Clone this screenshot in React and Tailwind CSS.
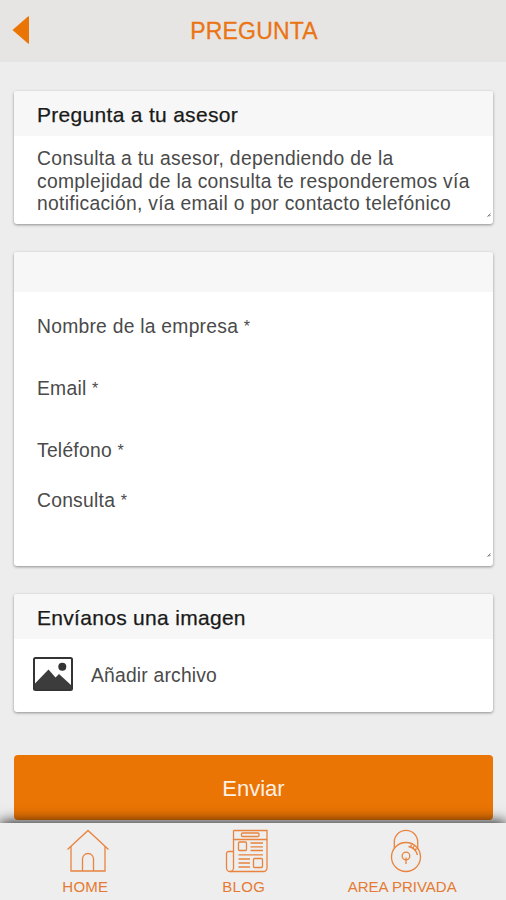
function HomeIcon() {
  return (
    <svg className="ml-[5px]" width="44" height="44" viewBox="0 0 44 44" fill="none" stroke="#e8843f" strokeWidth="1.3">
      <path d="M1.5 20.5 L22 1.5 L42.5 20.5" />
      <path d="M5 17.5 V42 H39 V17.5" />
      <path d="M16.5 42 V30 a5.5 5.5 0 0 1 11 0 V42" />
    </svg>
  );
}

function BlogIcon() {
  return (
    <svg className="ml-[6px]" width="44" height="44" viewBox="0 0 44 44" fill="none" stroke="#e8843f" strokeWidth="1.3">
      <path d="M8.5 1.5 H42 V39 a3.5 3.5 0 0 1 -3.5 3.5 H5 a3.5 3.5 0 0 1 -3.5 -3.5 V24.5 a2 2 0 0 1 2 -2 H8.5" />
      <path d="M8.5 1.5 V39 a3.5 3.5 0 0 1 -3.5 3.5" />
      <path d="M8.5 10.5 H42" />
      <rect x="16.5" y="4" width="17.5" height="3.5" rx="1" />
      <rect x="13.5" y="13" width="8" height="8.5" rx="1" />
      <rect x="28.5" y="29.5" width="9" height="9" rx="1" />
      <path d="M25.5 14 H38 M25.5 17.8 H38 M25.5 21.5 H38 M13.5 25.8 H38 M13.5 30 H25 M13.5 34 H25 M13.5 38 H25" />
    </svg>
  );
}

function LockIcon() {
  return (
    <svg className="ml-[7px]" width="44" height="44" viewBox="0 0 44 44" fill="none" stroke="#e8843f" strokeWidth="1.3">
      <circle cx="22" cy="28" r="14.5" />
      <path d="M10.3 19 V13 a11.7 11.7 0 0 1 23.4 0 V20" />
      <path d="M24.5 17.5 A11.5 11.5 0 0 1 33.5 26 M27.5 15.5 L26.5 18 M30 17 L28.5 20 M32.5 19.5 L30.5 22" />
      <circle cx="22" cy="27" r="3.8" />
      <path d="M22 28.5 V35" />
    </svg>
  );
}

function PictureIcon() {
  return (
    <svg className="-mt-[2px]" width="40" height="34" viewBox="0 0 40 34">
      <rect x="1" y="1" width="38" height="32" rx="1.5" fill="#fff" stroke="#333" strokeWidth="2" />
      <path d="M1.5 27 L15.5 12.5 L22.5 20.5 L26 17 L38.5 28.5 V32.5 H1.5 Z" fill="#3c3c3c" />
      <circle cx="29.3" cy="9.8" r="4" fill="#333" />
    </svg>
  );
}

function ResizeGrip({ className }) {
  return (
    <svg className={`absolute ${className}`} width="4" height="4" viewBox="0 0 4 4" stroke="#777">
      <path d="M0.5 3.5 L3.5 0.5 M2 3.5 L3.5 2" />
    </svg>
  );
}

const fields = ["Nombre de la empresa", "Email", "Teléfono"];

const tabs = [
  { label: "HOME", icon: HomeIcon, spacing: "tracking-[0.2px]" },
  { label: "BLOG", icon: BlogIcon, spacing: "tracking-[0.3px]" },
  { label: "AREA PRIVADA", icon: LockIcon, spacing: "tracking-normal" },
];

const cardStyle =
  "relative ml-[14px] w-[479px] shrink-0 overflow-hidden rounded-[3px] bg-white shadow-[0_1px_3px_rgba(0,0,0,0.4)]";

const titleStyle =
  "h-[45px] bg-[#f7f7f7] pl-[23px] text-[21px] leading-[48px] tracking-[0.3px] text-[#1a1a1a] [-webkit-text-stroke:0.25px]";

function FieldLabel({ text, className }) {
  return (
    <label className={className}>
      {text} <span className="relative -top-[1px] text-[16px]">*</span>
    </label>
  );
}

export default function App() {
  return (
    <div className="flex h-[900px] w-[506px] flex-col overflow-hidden bg-[#ededed] font-['Liberation_Sans',Arial,sans-serif]">
      <header className="grid h-[62px] shrink-0 grid-cols-[30px_1fr_30px] items-center bg-[#e6e5e3]">
        <svg className="ml-3 -mt-[2px]" width="17" height="28" viewBox="0 0 17 28" fill="#ea7404">
          <path d="M0.5 14 L16 0.5 Q17 0 17 1 V27 Q17 28 16 27.5 Z" />
        </svg>
        <h1 className="pl-[2px] text-center text-[23px] leading-[30px] tracking-[0.2px] text-[#ea7414] [-webkit-text-stroke:0.3px]">
          PREGUNTA
        </h1>
      </header>

      <main className="flex h-[761px] shrink-0 flex-col overflow-hidden pt-[29px]">
        <section className={`${cardStyle} h-[133px]`}>
          <h2 className={titleStyle}>Pregunta a tu asesor</h2>
          <p className="pl-[23px] pt-[12px] text-[19.3px] leading-[22.5px] tracking-[0.29px] whitespace-nowrap text-[#4a4a4a]">
            Consulta a tu asesor, dependiendo de la
            <br />
            complejidad de la consulta te responderemos vía
            <br />
            notificación, vía email o por contacto telefónico
          </p>
          <ResizeGrip className="right-[2px] bottom-[7px]" />
        </section>

        <section className={`${cardStyle} mt-[28px] h-[314px]`}>
          <div className="h-[40px] bg-[#f7f7f7]" />
          <div className="flex flex-col pl-[23px] pt-[4px] text-[19.3px] tracking-[0.25px] text-[#4a4a4a]">
            {fields.map((field) => (
              <FieldLabel key={field} text={field} className="h-[62px] leading-[62px]" />
            ))}
            <FieldLabel text="Consulta" className="leading-[38px]" />
          </div>
          <ResizeGrip className="right-[2px] bottom-[9px]" />
        </section>

        <section className={`${cardStyle} mt-[28px] h-[118px]`}>
          <h2 className={titleStyle}>Envíanos una imagen</h2>
          <div className="flex items-center gap-[18px] pl-[19px] pt-[18px]">
            <PictureIcon />
            <span className="pt-[2px] text-[19.3px] leading-[34px] tracking-[0.2px] text-[#4a4a4a]">Añadir archivo</span>
          </div>
        </section>

        <button className="ml-[14px] mt-[43px] h-[65px] w-[479px] shrink-0 rounded-[4px] bg-[#ea7404] pt-[2px] text-[22px] text-[#fff0e4]">
          Enviar
        </button>
      </main>

      <nav className="relative flex h-[77px] shrink-0 bg-[#eeeeee] pl-[6px] shadow-[0_-1px_13px_rgba(0,0,0,0.9)]">
        {tabs.map(({ label, icon: Icon, spacing }) => (
          <a key={label} className="flex w-[158.5px] shrink-0 flex-col items-center pt-[6px]">
            <Icon />
            <span className={`mt-[5px] text-[15px] leading-[18px] whitespace-nowrap text-[#e57a32] ${spacing}`}>
              {label}
            </span>
          </a>
        ))}
      </nav>
    </div>
  );
}
